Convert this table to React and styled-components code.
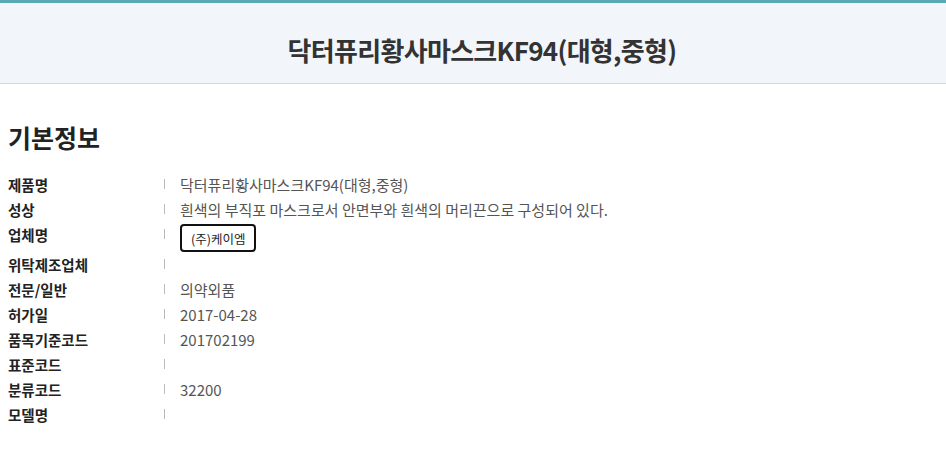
import React from 'react';
import styled, {createGlobalStyle} from "styled-components";

const GlobalStyle = createGlobalStyle`
  body {
    margin: 0;
    background: #fff;
    font-family: "Noto Sans CJK KR", "Noto Sans", sans-serif;
    color: #333;
  }
`

const TitleBar = styled.header`
  border-top: 3px solid #5aaab6;
  border-bottom: 1px solid #d6d6d6;
  background: #f2f6fb;
  height: 80px;
  box-sizing: content-box;
  display: flex;
  align-items: center;
  justify-content: center;
  padding-left: 18px;
`

const ProductTitle = styled.h1`
  margin: 12px 0 0;
  font-size: 26px;
  font-weight: 700;
  color: #333;
  letter-spacing: -0.7px;
`

const Content = styled.main`
  padding: 0 8px;
`

const SectionTitle = styled.h2`
  margin: 35px 0 17px;
  font-size: 25px;
  line-height: 36px;
  font-weight: 700;
  color: #222;
`

const InfoList = styled.dl`
  margin: 0;
`

const Row = styled.div`
  display: flex;
  align-items: flex-start;
  min-height: 25px;
`

const Label = styled.dt`
  width: 156px;
  flex-shrink: 0;
  font-size: 14.5px;
  line-height: 25px;
  font-weight: 700;
  color: #222;
`

const Value = styled.dd`
  margin: 0;
  position: relative;
  padding-left: 16px;
  font-size: 15px;
  line-height: 25px;
  color: #555;
  min-height: 25px;

  &::before {
    content: "";
    position: absolute;
    left: 0;
    top: 7px;
    width: 1px;
    height: 10px;
    background: #bbb;
  }
`

const CompanyButton = styled.button`
  margin: 2px 0 0;
  height: 28px;
  padding: 0 9px;
  border: 2px solid #111;
  border-radius: 4px;
  background: #fff;
  font-family: "Noto Sans CJK KR", sans-serif;
  font-size: 12.5px;
  color: #222;
  cursor: pointer;
`

const rows = [
    {label: "제품명", value: "닥터퓨리황사마스크KF94(대형,중형)"},
    {label: "성상", value: "흰색의 부직포 마스크로서 안면부와 흰색의 머리끈으로 구성되어 있다."},
    {label: "업체명", company: "(주)케이엠"},
    {label: "위탁제조업체", value: ""},
    {label: "전문/일반", value: "의약외품"},
    {label: "허가일", value: "2017-04-28"},
    {label: "품목기준코드", value: "201702199"},
    {label: "표준코드", value: ""},
    {label: "분류코드", value: "32200"},
    {label: "모델명", value: ""},
];

const App = () => {
    return (
        <>
            <GlobalStyle/>
            <TitleBar>
                <ProductTitle>닥터퓨리황사마스크KF94(대형,중형)</ProductTitle>
            </TitleBar>
            <Content>
                <SectionTitle>기본정보</SectionTitle>
                <InfoList>
                    {rows.map(row => (
                        <Row key={row.label}>
                            <Label>{row.label}</Label>
                            <Value>
                                {row.company
                                    ? <CompanyButton>{row.company}</CompanyButton>
                                    : row.value}
                            </Value>
                        </Row>
                    ))}
                </InfoList>
            </Content>
        </>
    );
};

export default App;
